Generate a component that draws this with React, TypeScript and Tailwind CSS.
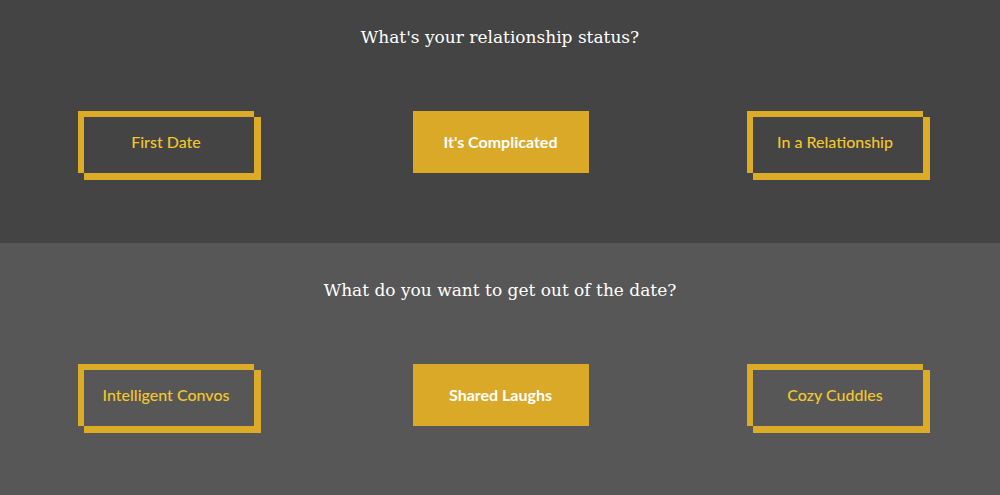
import React from "react";

const serif = { fontFamily: '"DejaVu Serif", serif' };
const sans = { fontFamily: 'Lato, "Open Sans", sans-serif' };

function OutlineButton({ label }: { label: string }) {
  return (
    <div className="relative w-[176px] h-[62px]">
      <div className="absolute left-0 top-0 right-0 bottom-0 border-t-[6px] border-l-[6px] border-[#dcab28]" />
      <div className="absolute left-[6px] top-[6px] right-[-7px] bottom-[-7px] border-r-[7px] border-b-[7px] border-[#dcab28]" />
      <div
        className="relative flex h-full w-full items-center justify-center text-[16px] font-medium text-[#f3c72c]"
        style={sans}
      >
        {label}
      </div>
    </div>
  );
}

function FilledButton({ label }: { label: string }) {
  return (
    <div
      className="flex w-[176px] h-[62px] items-center justify-center bg-[#daa928] text-[16px] font-bold text-white"
      style={sans}
    >
      {label}
    </div>
  );
}

export default function App() {
  return (
    <div className="h-[495px] w-[1000px] overflow-hidden">
      <div className="h-[243px] bg-[#444444] pt-[25px]">
        <h2 className="text-center text-[17px] leading-[24px] text-white" style={serif}>
          What's your relationship status?
        </h2>
        <div className="mt-[62px] flex justify-between pl-[78px] pr-[77px]">
          <OutlineButton label="First Date" />
          <FilledButton label="It's Complicated" />
          <OutlineButton label="In a Relationship" />
        </div>
      </div>
      <div className="h-[252px] bg-[#575757] pt-[35px]">
        <h2 className="text-center text-[17px] leading-[24px] text-white" style={serif}>
          What do you want to get out of the date?
        </h2>
        <div className="mt-[62px] flex justify-between pl-[78px] pr-[77px]">
          <OutlineButton label="Intelligent Convos" />
          <FilledButton label="Shared Laughs" />
          <OutlineButton label="Cozy Cuddles" />
        </div>
      </div>
    </div>
  );
}
